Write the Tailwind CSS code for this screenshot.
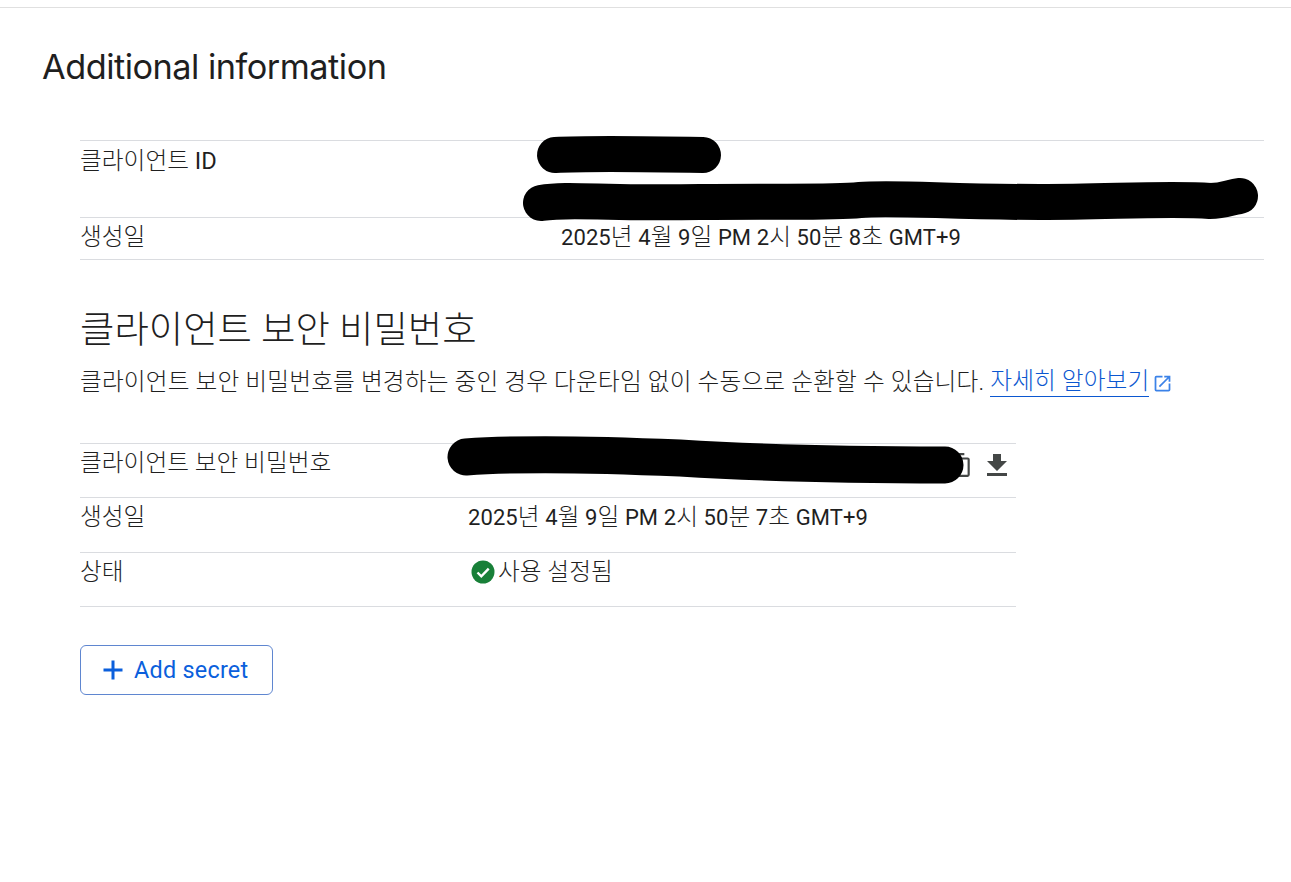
<!DOCTYPE html>
<html lang="ko">
  <head>
    <meta charset="UTF-8" />
    <title>Additional information</title>
    <script src="https://cdn.jsdelivr.net/npm/@tailwindcss/browser@4"></script>
  </head>
  <body class="relative bg-white text-[#1f1f1f] h-[882px] overflow-hidden font-['Roboto','Noto_Sans_CJK_KR',sans-serif] text-[23.7px] leading-[28px] font-light">
    <div class="h-[8px] border-b border-[#e0e0e0]"></div>

    <h1 class="ml-[42px] mt-[35px] h-[48px] text-[34.3px] leading-[48px] font-['Inter','Noto_Sans_CJK_KR',sans-serif] font-normal tracking-[-0.5px]">
      Additional information
    </h1>

    <div class="ml-[80px] mr-[27px] mt-[49px]">
      <!-- client id -->
      <div class="flex h-[77px] border-t border-[#dadce0] pt-[6px]">
        <div class="w-[481px]">클라이언트 <span class="font-normal">ID</span></div>
        <div></div>
      </div>
      <div class="flex h-[42px] border-t border-[#dadce0] pt-[5px]">
        <div class="w-[481px]">생성일</div>
        <div class="text-[22px] font-normal tracking-[0.08px]">2025<span class="text-[23.7px] font-light">년</span> 4<span class="text-[23.7px] font-light">월</span> 9<span class="text-[23.7px] font-light">일</span> PM 2<span class="text-[23.7px] font-light">시</span> 50<span class="text-[23.7px] font-light">분</span> 8<span class="text-[23.7px] font-light">초</span> GMT+9</div>
      </div>
      <div class="border-t border-[#dadce0]"></div>

      <h2 class="mt-[46px] text-[37.4px] leading-[48px] font-light">클라이언트 보안 비밀번호</h2>
      <p class="mt-[13px] flex items-center">
        <span class="tracking-[0.14px]">클라이언트 보안 비밀번호를 변경하는 중인 경우 다운타임 없이 수동으로 순환할 수 있습니다.</span>
        <a class="ml-[6px] text-[#0b57d0] border-b border-[#0b57d0] h-[30px] tracking-[0.1px]">자세히 알아보기</a>
        <svg class="ml-[3px] mt-[2px] w-[21px] h-[21px] fill-[#3b82e8]" viewBox="0 0 24 24"><path d="M19 19H5V5h7V3H5a2 2 0 0 0-2 2v14a2 2 0 0 0 2 2h14a2 2 0 0 0 2-2v-7h-2v7zM14 3v2h3.59l-9.83 9.83 1.41 1.41L19 6.41V10h2V3h-7z" /></svg>
      </p>

      <!-- secret -->
      <div class="w-[936px] mt-[46px]">
        <div class="flex h-[54px] border-t border-[#dadce0] pt-[5px]">
          <div class="w-[388px]">클라이언트 보안 비밀번호</div>
          <div class="flex-1 flex justify-end items-start gap-[14px] pr-[9px]">
            <svg class="mt-[3px] w-[26px] h-[26px] fill-[#444746]" viewBox="0 0 24 24"><path d="M16 1H4a2 2 0 0 0-2 2v14h2V3h12V1zm3 4H8a2 2 0 0 0-2 2v14a2 2 0 0 0 2 2h11a2 2 0 0 0 2-2V7a2 2 0 0 0-2-2zm0 16H8V7h11v14z" /></svg>
            <svg class="mt-[5px] w-[20px] h-[22px] fill-[#444746]" viewBox="0 0 20 22"><path d="M6 0h8v7h6L10 17 0 7h6zM0 19h20v3H0z" /></svg>
          </div>
        </div>
        <div class="flex h-[55px] border-t border-[#dadce0] pt-[5px]">
          <div class="w-[388px]">생성일</div>
          <div class="text-[22px] font-normal tracking-[0.08px]">2025<span class="text-[23.7px] font-light">년</span> 4<span class="text-[23.7px] font-light">월</span> 9<span class="text-[23.7px] font-light">일</span> PM 2<span class="text-[23.7px] font-light">시</span> 50<span class="text-[23.7px] font-light">분</span> 7<span class="text-[23.7px] font-light">초</span> GMT+9</div>
        </div>
        <div class="flex h-[54px] border-t border-[#dadce0] pt-[5px]">
          <div class="w-[388px]">상태</div>
          <div class="flex items-start">
            <svg class="ml-[3px] mt-[2px] w-[24px] h-[24px]" viewBox="0 0 24 24"><circle cx="12" cy="12" r="11.5" fill="#188038" /><path d="M6.5 12.5l3.8 3.8 7.4-7.6" fill="none" stroke="#fff" stroke-width="2.4" /></svg>
            <span class="ml-[3px]">사용 설정됨</span>
          </div>
        </div>
        <div class="border-t border-[#dadce0]"></div>
      </div>

      <button class="mt-[38px] flex items-center w-[193px] h-[50px] rounded-[6px] border border-[#5f86d0] text-[#0b5fdc] font-normal tracking-[0.25px] text-[23.4px] pl-[20px]">
        <svg class="w-[24px] h-[24px] mr-[9px] stroke-[#0b5fdc]" viewBox="0 0 24 24"><path d="M12 2.5v19M2.5 12h19" stroke-width="3" fill="none" /></svg>
        Add secret
      </button>
    </div>

    <!-- redaction marks drawn over the screenshot -->
    <svg class="absolute left-0 top-0 w-[1291px] h-[882px] pointer-events-none" viewBox="0 0 1291 882">
      <g fill="none" stroke="#000" stroke-linecap="round" stroke-linejoin="round">
        <path d="M555 155C590 153 650 154 703 155" stroke-width="36" />
        <path d="M541 203C570 198 600 204 700 202C780 201 830 203 860 200C890 197 950 202 1040 202C1110 202 1170 198 1210 201C1225 201 1230 197 1240 196" stroke-width="36" />
        <path d="M466 457C520 453 610 455 680 458C760 463 850 465 945 465" stroke-width="37" />
      </g>
    </svg>
  </body>
</html>
